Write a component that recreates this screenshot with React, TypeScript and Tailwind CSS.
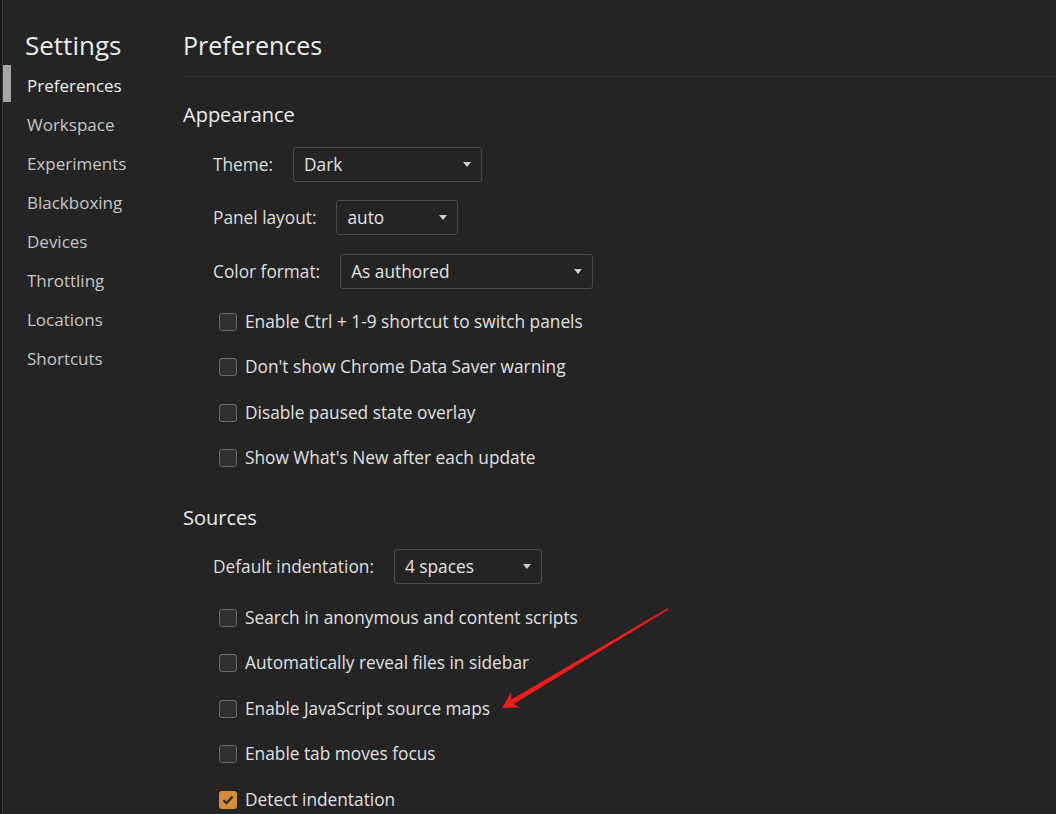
import React from "react";

const sideItems = [
  "Preferences",
  "Workspace",
  "Experiments",
  "Blackboxing",
  "Devices",
  "Throttling",
  "Locations",
  "Shortcuts",
];

function Select({ value, width }: { value: string; width: string }) {
  return (
    <div
      className={`${width} h-[35px] flex items-center justify-between pl-[10px] pr-[10px] border border-[#4a4a4a] rounded-[3px] bg-[#242424] text-[#e2e2e2]`}
    >
      <span>{value}</span>
      <svg width="8" height="5" viewBox="0 0 8 5">
        <path d="M0 0h8L4 5z" fill="#cfcfcf" />
      </svg>
    </div>
  );
}

function SelectRow({ label, value, width, className }: { label: string; value: string; width: string; className: string }) {
  return (
    <div className={`flex items-center gap-5 pl-[30px] ${className}`}>
      <span className="text-[#dedede]">{label}</span>
      <Select value={value} width={width} />
    </div>
  );
}

function Check({ label, checked = false }: { label: string; checked?: boolean }) {
  return (
    <div className="h-[45.5px] flex items-center pl-[36px] gap-[8px]">
      {checked ? (
        <div className="w-[18px] h-[18px] rounded-[3px] bg-[#d58b38] flex items-center justify-center">
          <svg width="12" height="10" viewBox="0 0 12 10">
            <path d="M1.5 5.2l3 3L10.5 1.5" fill="none" stroke="#262626" strokeWidth="2.2" />
          </svg>
        </div>
      ) : (
        <div className="w-[18px] h-[18px] rounded-[3px] border border-[#6e6e6e] bg-[#303030]" />
      )}
      <span className="text-[#e0e0e0]">{label}</span>
    </div>
  );
}

export default function App() {
  return (
    <div
      className="relative w-[1056px] h-[814px] overflow-hidden flex bg-[#242424] text-[17.3px]"
      style={{ fontFamily: '"Open Sans", "Noto Sans", sans-serif' }}
    >
      <div className="w-[3px] h-full bg-[#1a1a1a] border-r border-[#3c3c3c]" />

      {/* sidebar */}
      <div className="w-[180px] shrink-0 pt-[25px]">
        <div className="h-[40px] leading-[40px] pl-[22px] text-[26px] text-[#ebebeb]">Settings</div>
        <div>
          {sideItems.map((item, i) => (
            <div key={item} className="relative h-[39px] flex items-center pl-[24px] pt-[2px] text-[17px]">
              {i === 0 && <div className="absolute left-0 top-0 w-[8px] h-[37px] bg-[#a6a6a6]" />}
              <span className={i === 0 ? "text-[#ececec]" : "text-[#c6c6c6]"}>{item}</span>
            </div>
          ))}
        </div>
      </div>

      {/* main */}
      <div className="flex-1 pt-[25px]">
        <div className="h-[40px] leading-[40px] text-[25px] text-[#ececec]">Preferences</div>
        <div className="mt-[11px] border-t border-[#363636]" />

        <div className="mt-[23px] h-[30px] leading-[30px] text-[20px] text-[#ececec]">Appearance</div>
        <SelectRow className="mt-[17px]" label="Theme:" value="Dark" width="w-[189px]" />
        <SelectRow className="mt-[18px]" label="Panel layout:" value="auto" width="w-[122px]" />
        <SelectRow className="mt-[19px]" label="Color format:" value="As authored" width="w-[253px]" />

        <div className="mt-[10px]">
          <Check label="Enable Ctrl + 1-9 shortcut to switch panels" />
          <Check label="Don't show Chrome Data Saver warning" />
          <Check label="Disable paused state overlay" />
          <Check label="Show What's New after each update" />
        </div>

        <div className="mt-[22px] h-[30px] leading-[30px] text-[20px] text-[#ececec]">Sources</div>
        <SelectRow className="mt-[16px]" label="Default indentation:" value="4 spaces" width="w-[148px]" />

        <div className="mt-[11px]">
          <Check label="Search in anonymous and content scripts" />
          <Check label="Automatically reveal files in sidebar" />
          <Check label="Enable JavaScript source maps" />
          <Check label="Enable tab moves focus" />
          <Check label="Detect indentation" checked />
        </div>
      </div>

      {/* annotation arrow */}
      <svg className="absolute left-0 top-0 pointer-events-none" width="1056" height="814">
        <polygon
          points="502,708 520.4,707.6 513.6,704 668.6,609.6 667.4,608.2 511,699.8 511.2,692.2"
          fill="#f21b1b"
        />
      </svg>
    </div>
  );
}
